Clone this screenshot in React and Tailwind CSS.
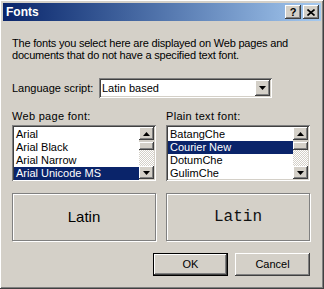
import React from 'react';

const raised =
  'shadow-[inset_-1px_-1px_#404040,inset_1px_1px_#ffffff,inset_-2px_-2px_#808080,inset_2px_2px_#d4d0c8]';
const sunken =
  'shadow-[inset_1px_1px_#808080,inset_-1px_-1px_#ffffff,inset_2px_2px_#404040,inset_-2px_-2px_#d4d0c8]';

const ArrowUp = () => (
  <svg width="7" height="4" viewBox="0 0 7 4"><path d="M3.5 0L7 4H0z" fill="#000" /></svg>
);
const ArrowDown = () => (
  <svg width="7" height="4" viewBox="0 0 7 4"><path d="M0 0H7L3.5 4z" fill="#000" /></svg>
);

const ScrollBar = () => (
  <div className="flex flex-col w-[15px] h-full">
    <div className={`h-[13px] flex items-center justify-center bg-[#d4d0c8] ${raised}`}><ArrowUp /></div>
    <div className="h-[2px] bg-[#d4d0c8]" />
    <div className={`h-[8px] bg-[#d4d0c8] ${raised}`} />
    <div className="flex-1 bg-[repeating-conic-gradient(#ffffff_0_25%,#d4d0c8_0_50%)] bg-[length:2px_2px]" />
    <div className={`h-[13px] flex items-center justify-center bg-[#d4d0c8] ${raised}`}><ArrowDown /></div>
  </div>
);

const ListBox = ({ items, selected }) => (
  <div className={`w-[144px] h-[56px] bg-white p-[2px] flex ${sunken}`}>
    <div className="flex-1 flex flex-col pt-px">
      {items.map((it) => (
        <div
          key={it}
          className={`h-[13px] leading-[13px] pl-[2px] whitespace-nowrap ${it === selected ? 'bg-[#0a246a] text-white' : 'text-black'}`}
        >
          {it}
        </div>
      ))}
    </div>
    <ScrollBar />
  </div>
);

const Preview = ({ children, mono }) => (
  <div className="w-[144px] h-[48px] border border-[#808080] shadow-[inset_1px_1px_#ffffff,1px_1px_#ffffff] flex items-center justify-center">
    <span
      className={mono ? 'text-[16px] text-[#111]' : 'text-[15px] text-black'}
      style={{ fontFamily: mono ? '"Liberation Mono", monospace' : '"Liberation Sans", Arial, sans-serif' }}
    >
      {children}
    </span>
  </div>
);

export default function App() {
  return (
    <div
      className={`w-[324px] h-[289px] bg-[#d4d0c8] p-[3px] flex flex-col text-[11px] text-black ${raised}`}
      style={{ fontFamily: '"Liberation Sans", Arial, sans-serif' }}
    >
      {/* title bar */}
      <div className="h-[18px] flex items-center bg-gradient-to-r from-[#0a246a] to-[#a6caf0] pl-[3px] pr-[2px]">
        <span className="text-white font-bold text-[12px] flex-1">Fonts</span>
        <div className={`w-[16px] h-[14px] bg-[#d4d0c8] flex items-center justify-center font-bold text-[11px] ${raised}`}>?</div>
        <div className={`w-[16px] h-[14px] ml-[2px] bg-[#d4d0c8] flex items-center justify-center ${raised}`}>
          <svg width="8" height="7" viewBox="0 0 8 7">
            <path d="M0.5 0.5L7.5 6.5M7.5 0.5L0.5 6.5" stroke="#000" strokeWidth="1.6" />
          </svg>
        </div>
      </div>

      <div className="flex flex-col px-[9px]">
        <p className="mt-[16px] leading-[12px] whitespace-nowrap tracking-[-0.2px]">
          The fonts you select here are displayed on Web pages and
          <br />
          documents that do not have a specified text font.
        </p>

        <div className="flex items-center mt-[17px] h-[20px]">
          <span className="w-[87px] whitespace-nowrap">Language script:</span>
          <div className={`w-[173px] h-[20px] bg-white p-[2px] flex items-center ${sunken}`}>
            <span className="flex-1 pl-[1px]">Latin based</span>
            <div className={`w-[15px] h-[16px] bg-[#d4d0c8] flex items-center justify-center ${raised}`}><ArrowDown /></div>
          </div>
        </div>

        <div className="flex mt-[9px] gap-[10px]">
          <div className="flex flex-col">
            <span className="h-[18px] leading-[18px] tracking-[0.3px]">Web page font:</span>
            <ListBox items={['Arial', 'Arial Black', 'Arial Narrow', 'Arial Unicode MS']} selected="Arial Unicode MS" />
          </div>
          <div className="flex flex-col">
            <span className="h-[18px] leading-[18px] tracking-[0.3px]">Plain text font:</span>
            <ListBox items={['BatangChe', 'Courier New', 'DotumChe', 'GulimChe']} selected="Courier New" />
          </div>
        </div>

        <div className="flex mt-[12px] gap-[10px]">
          <Preview>Latin</Preview>
          <Preview mono>Latin</Preview>
        </div>

        <div className="flex justify-end mt-[12px] gap-[7px] pr-[2px]">
          <button className={`w-[75px] h-[23px] bg-[#d4d0c8] border border-black ${raised}`}>OK</button>
          <button className={`w-[75px] h-[23px] bg-[#d4d0c8] ${raised}`}>Cancel</button>
        </div>
      </div>
    </div>
  );
}
